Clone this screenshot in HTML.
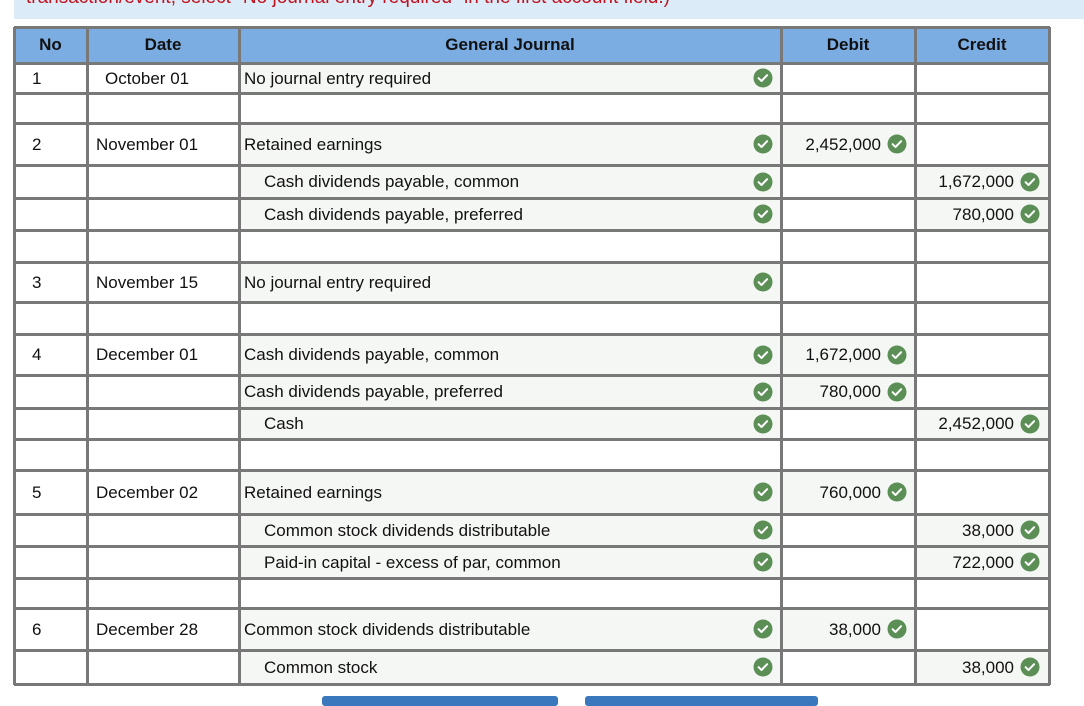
<!DOCTYPE html>
<html><head><meta charset="utf-8"><style>
body{margin:0;width:1084px;height:702px;overflow:hidden;background:#fff;font-family:"Liberation Sans",Arial,sans-serif;font-size:17px;color:#111;position:relative}
.banner{position:absolute;left:14px;top:0;width:1070px;height:19px;background:#dcebf8;overflow:hidden}
.banner span{position:absolute;left:12px;top:-13px;color:#c0121e;font-size:19px;white-space:nowrap}
.hdr{position:absolute;top:27px;left:14px;width:1036px;height:36px;background:#7bade2}
.h{position:absolute;top:27px;height:36px;display:flex;align-items:center;justify-content:center;font-weight:bold}
.r{position:absolute;left:0;width:1084px}
.c{position:absolute;top:0;bottom:0;display:flex;align-items:center;white-space:nowrap;padding-top:1px;box-sizing:border-box}
.sh{background:#f5f7f4}
.hl{position:absolute;left:14px;width:1036px;height:3px;background:#787878}
.vl{position:absolute;top:27px;height:658px;width:3px;background:#787878}
.ck{position:absolute;top:50%;margin-top:-10px;width:20px;height:20px}
.num{justify-content:flex-end}
.btn{position:absolute;top:696px;height:10px;background:#3a78bd;border-radius:3px}
</style></head><body>
<div class="banner"><span>transaction/event, select "No journal entry required" in the first account field.)</span></div>
<div class="hdr"></div>
<div class="h" style="left:14px;width:73px">No</div>
<div class="h" style="left:87px;width:152px">Date</div>
<div class="h" style="left:239px;width:542px">General Journal</div>
<div class="h" style="left:781px;width:134px">Debit</div>
<div class="h" style="left:915px;width:134px">Credit</div>

<svg width="0" height="0" style="position:absolute"><defs><symbol id="k" viewBox="0 0 20 20"><circle cx="10" cy="10" r="9.5" fill="#5b8f56"/><path d="M5.6 10.2l2.9 2.8 5.6-5.8" fill="none" stroke="#fff" stroke-width="2" stroke-linecap="round" stroke-linejoin="round"/></symbol></defs></svg>

<div class="r" style="top:63px;height:30px">
<div class="c" style="left:32px">1</div><div class="c" style="left:105px">October 01</div>
<div class="c sh" style="left:239px;width:542px"><span style="margin-left:5px">No journal entry required</span><svg class="ck" style="left:514px"><use href="#k"/></svg></div></div>
<div class="r" style="top:123px;height:42px">
<div class="c" style="left:32px">2</div><div class="c" style="left:96px">November 01</div>
<div class="c sh" style="left:239px;width:542px"><span style="margin-left:5px">Retained earnings</span><svg class="ck" style="left:514px"><use href="#k"/></svg></div>
<div class="c sh num" style="left:781px;width:134px"><span style="margin-right:34px">2,452,000</span><svg class="ck" style="left:106px"><use href="#k"/></svg></div></div>
<div class="r" style="top:165px;height:33px">
<div class="c sh" style="left:239px;width:542px"><span style="margin-left:25px">Cash dividends payable, common</span><svg class="ck" style="left:514px"><use href="#k"/></svg></div>
<div class="c sh num" style="left:915px;width:134px"><span style="margin-right:35px">1,672,000</span><svg class="ck" style="left:105px"><use href="#k"/></svg></div></div>
<div class="r" style="top:198px;height:32px">
<div class="c sh" style="left:239px;width:542px"><span style="margin-left:25px">Cash dividends payable, preferred</span><svg class="ck" style="left:514px"><use href="#k"/></svg></div>
<div class="c sh num" style="left:915px;width:134px"><span style="margin-right:35px">780,000</span><svg class="ck" style="left:105px"><use href="#k"/></svg></div></div>
<div class="r" style="top:262px;height:40px">
<div class="c" style="left:32px">3</div><div class="c" style="left:96px">November 15</div>
<div class="c sh" style="left:239px;width:542px"><span style="margin-left:5px">No journal entry required</span><svg class="ck" style="left:514px"><use href="#k"/></svg></div></div>
<div class="r" style="top:334px;height:41px">
<div class="c" style="left:32px">4</div><div class="c" style="left:96px">December 01</div>
<div class="c sh" style="left:239px;width:542px"><span style="margin-left:5px">Cash dividends payable, common</span><svg class="ck" style="left:514px"><use href="#k"/></svg></div>
<div class="c sh num" style="left:781px;width:134px"><span style="margin-right:34px">1,672,000</span><svg class="ck" style="left:106px"><use href="#k"/></svg></div></div>
<div class="r" style="top:375px;height:33px">
<div class="c sh" style="left:239px;width:542px"><span style="margin-left:5px">Cash dividends payable, preferred</span><svg class="ck" style="left:514px"><use href="#k"/></svg></div>
<div class="c sh num" style="left:781px;width:134px"><span style="margin-right:34px">780,000</span><svg class="ck" style="left:106px"><use href="#k"/></svg></div></div>
<div class="r" style="top:408px;height:31px">
<div class="c sh" style="left:239px;width:542px"><span style="margin-left:25px">Cash</span><svg class="ck" style="left:514px"><use href="#k"/></svg></div>
<div class="c sh num" style="left:915px;width:134px"><span style="margin-right:35px">2,452,000</span><svg class="ck" style="left:105px"><use href="#k"/></svg></div></div>
<div class="r" style="top:470px;height:44px">
<div class="c" style="left:32px">5</div><div class="c" style="left:96px">December 02</div>
<div class="c sh" style="left:239px;width:542px"><span style="margin-left:5px">Retained earnings</span><svg class="ck" style="left:514px"><use href="#k"/></svg></div>
<div class="c sh num" style="left:781px;width:134px"><span style="margin-right:34px">760,000</span><svg class="ck" style="left:106px"><use href="#k"/></svg></div></div>
<div class="r" style="top:514px;height:32px">
<div class="c sh" style="left:239px;width:542px"><span style="margin-left:25px">Common stock dividends distributable</span><svg class="ck" style="left:514px"><use href="#k"/></svg></div>
<div class="c sh num" style="left:915px;width:134px"><span style="margin-right:35px">38,000</span><svg class="ck" style="left:105px"><use href="#k"/></svg></div></div>
<div class="r" style="top:546px;height:32px">
<div class="c sh" style="left:239px;width:542px"><span style="margin-left:25px">Paid-in capital - excess of par, common</span><svg class="ck" style="left:514px"><use href="#k"/></svg></div>
<div class="c sh num" style="left:915px;width:134px"><span style="margin-right:35px">722,000</span><svg class="ck" style="left:105px"><use href="#k"/></svg></div></div>
<div class="r" style="top:608px;height:42px">
<div class="c" style="left:32px">6</div><div class="c" style="left:96px">December 28</div>
<div class="c sh" style="left:239px;width:542px"><span style="margin-left:5px">Common stock dividends distributable</span><svg class="ck" style="left:514px"><use href="#k"/></svg></div>
<div class="c sh num" style="left:781px;width:134px"><span style="margin-right:34px">38,000</span><svg class="ck" style="left:106px"><use href="#k"/></svg></div></div>
<div class="r" style="top:650px;height:34px">
<div class="c sh" style="left:239px;width:542px"><span style="margin-left:25px">Common stock</span><svg class="ck" style="left:514px"><use href="#k"/></svg></div>
<div class="c sh num" style="left:915px;width:134px"><span style="margin-right:35px">38,000</span><svg class="ck" style="left:105px"><use href="#k"/></svg></div></div>

<div class="hl" style="top:26px"></div><div class="hl" style="top:62px"></div><div class="hl" style="top:92px"></div><div class="hl" style="top:122px"></div><div class="hl" style="top:164px"></div><div class="hl" style="top:197px"></div><div class="hl" style="top:229px"></div><div class="hl" style="top:261px"></div><div class="hl" style="top:301px"></div><div class="hl" style="top:333px"></div><div class="hl" style="top:374px"></div><div class="hl" style="top:407px"></div><div class="hl" style="top:438px"></div><div class="hl" style="top:469px"></div><div class="hl" style="top:513px"></div><div class="hl" style="top:545px"></div><div class="hl" style="top:577px"></div><div class="hl" style="top:607px"></div><div class="hl" style="top:649px"></div><div class="hl" style="top:683px"></div>
<div class="vl" style="left:13px"></div><div class="vl" style="left:86px"></div><div class="vl" style="left:238px"></div><div class="vl" style="left:780px"></div><div class="vl" style="left:914px"></div><div class="vl" style="left:1048px"></div>

<div class="btn" style="left:322px;width:236px"></div>
<div class="btn" style="left:585px;width:233px"></div>
</body></html>
